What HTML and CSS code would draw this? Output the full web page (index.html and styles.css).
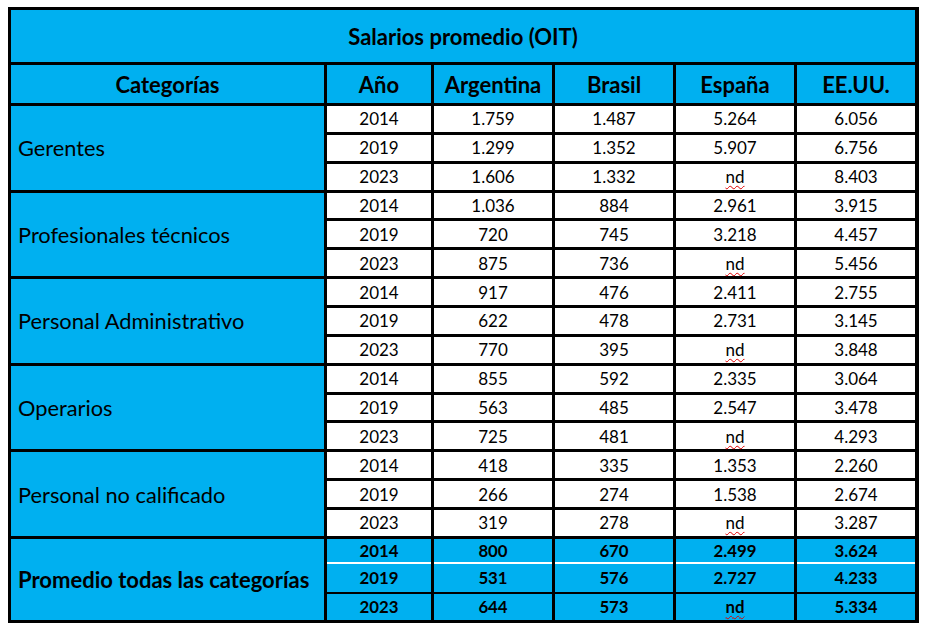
FILE: index.html
```html
<!DOCTYPE html>
<html lang="es">
<head>
<meta charset="utf-8">
<title>Salarios promedio (OIT)</title>
<link rel="stylesheet" href="styles.css">
</head>
<body>
<div class="sheet">
  <div class="title">Salarios promedio (OIT)</div>

  <div class="head">Categorías</div>
  <div class="head">Año</div>
  <div class="head">Argentina</div>
  <div class="head">Brasil</div>
  <div class="head">España</div>
  <div class="head">EE.UU.</div>

  <div class="cat">Gerentes</div>
  <div class="num">2014</div><div class="num">1.759</div><div class="num">1.487</div><div class="num">5.264</div><div class="num">6.056</div>
  <div class="num">2019</div><div class="num">1.299</div><div class="num">1.352</div><div class="num">5.907</div><div class="num">6.756</div>
  <div class="num">2023</div><div class="num">1.606</div><div class="num">1.332</div><div class="num"><span class="sq">nd</span></div><div class="num">8.403</div>

  <div class="cat">Profesionales técnicos</div>
  <div class="num">2014</div><div class="num">1.036</div><div class="num">884</div><div class="num">2.961</div><div class="num">3.915</div>
  <div class="num">2019</div><div class="num">720</div><div class="num">745</div><div class="num">3.218</div><div class="num">4.457</div>
  <div class="num">2023</div><div class="num">875</div><div class="num">736</div><div class="num"><span class="sq">nd</span></div><div class="num">5.456</div>

  <div class="cat">Personal Administrativo</div>
  <div class="num">2014</div><div class="num">917</div><div class="num">476</div><div class="num">2.411</div><div class="num">2.755</div>
  <div class="num">2019</div><div class="num">622</div><div class="num">478</div><div class="num">2.731</div><div class="num">3.145</div>
  <div class="num">2023</div><div class="num">770</div><div class="num">395</div><div class="num"><span class="sq">nd</span></div><div class="num">3.848</div>

  <div class="cat">Operarios</div>
  <div class="num">2014</div><div class="num">855</div><div class="num">592</div><div class="num">2.335</div><div class="num">3.064</div>
  <div class="num">2019</div><div class="num">563</div><div class="num">485</div><div class="num">2.547</div><div class="num">3.478</div>
  <div class="num">2023</div><div class="num">725</div><div class="num">481</div><div class="num"><span class="sq">nd</span></div><div class="num">4.293</div>

  <div class="cat">Personal no calificado</div>
  <div class="num">2014</div><div class="num">418</div><div class="num">335</div><div class="num">1.353</div><div class="num">2.260</div>
  <div class="num">2019</div><div class="num">266</div><div class="num">274</div><div class="num">1.538</div><div class="num">2.674</div>
  <div class="num">2023</div><div class="num">319</div><div class="num">278</div><div class="num"><span class="sq">nd</span></div><div class="num">3.287</div>

  <div class="cat total">Promedio todas las categorías</div>
  <div class="tot r1">2014</div><div class="tot r1">800</div><div class="tot r1">670</div><div class="tot r1">2.499</div><div class="tot r1">3.624</div>
  <div class="tot r2">2019</div><div class="tot r2">531</div><div class="tot r2">576</div><div class="tot r2">2.727</div><div class="tot r2">4.233</div>
  <div class="tot r3">2023</div><div class="tot r3">644</div><div class="tot r3">573</div><div class="tot r3"><span class="sq">nd</span></div><div class="tot r3">5.334</div>
</div>
</body>
</html>
```

FILE: styles.css
```css
html, body {
  margin: 0;
  padding: 0;
  background: #ffffff;
}

body {
  padding: 7px 0 0 8px;
  font-family: Lato, "Open Sans", sans-serif;
  color: #000;
}

.sheet {
  display: grid;
  width: 911px;
  box-sizing: border-box;
  grid-template-columns: 313px 104px 118px 118px 118px 118px;
  grid-template-rows: 55px 41px repeat(15, 28.87px) 25px 30px 26px;
  column-gap: 3px;
  row-gap: 0;
  background: #000;
  border-style: solid;
  border-color: #000;
  border-width: 3px 4px 3px 3px;
}

.sheet > div {
  box-sizing: border-box;
  display: flex;
  align-items: center;
  justify-content: center;
  border-bottom: 3px solid #000;
  white-space: nowrap;
}

.title {
  grid-column: 1 / -1;
  background: #00b0f0;
  font-weight: 700;
  font-size: 22px;
}

.head {
  background: #00b0f0;
  font-weight: 700;
  font-size: 22px;
}

.cat {
  grid-row: span 3;
  background: #00b0f0;
  justify-content: flex-start !important;
  padding-left: 7px;
  font-size: 21.8px;
}

.cat.total {
  font-weight: 700;
  font-size: 22px;
  border-bottom: none !important;
}

.num {
  background: #ffffff;
  font-size: 17px;
}

.tot {
  background: #00b0f0;
  font-weight: 700;
  font-size: 16.8px;
}

.tot.r1 {
  border-bottom: 2px solid #ffffff !important;
}

.tot.r2 {
  border-bottom: 2px solid #000 !important;
}

.tot.r3 {
  border-bottom: none !important;
}

.sq {
  text-decoration: underline wavy #e00000;
  text-decoration-thickness: 1px;
  text-underline-offset: 2px;
}
```
